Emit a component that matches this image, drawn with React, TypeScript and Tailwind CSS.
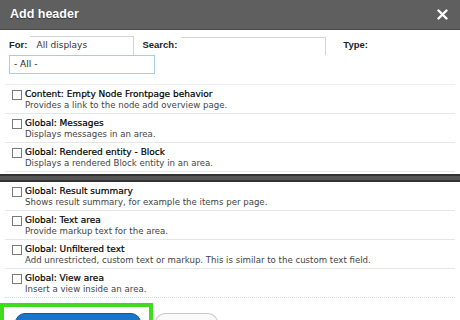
import React from "react";

const groupA = [
  { title: "Content: Empty Node Frontpage behavior", desc: "Provides a link to the node add overview page." },
  { title: "Global: Messages", desc: "Displays messages in an area." },
  { title: "Global: Rendered entity - Block", desc: "Displays a rendered Block entity in an area." },
];

const groupB = [
  { title: "Global: Result summary", desc: "Shows result summary, for example the items per page." },
  { title: "Global: Text area", desc: "Provide markup text for the area." },
  {
    title: "Global: Unfiltered text",
    desc: "Add unrestricted, custom text or markup. This is similar to the custom text field.",
  },
  { title: "Global: View area", desc: "Insert a view inside an area." },
];

function Option({ title, desc, last }: { title: string; desc: string; last?: boolean }) {
  return (
    <div
      className={`mx-[5px] pl-[7px] pt-[4px] pb-[2px] h-[29px] ${
        last ? "border-b border-dotted border-[#d8d8d8]" : "border-b border-[#e6e6e6]"
      }`}
    >
      <div className="flex items-center h-[11px] gap-[3px]">
        <span className="w-[10px] h-[10px] border border-[#7a7a7a] bg-white shrink-0" />
        <span className="text-[9px] text-black leading-none [-webkit-text-stroke:0.2px_black]">{title}</span>
      </div>
      <div className="pl-[13px] h-[11px] flex items-center text-[8.6px] text-[#444] leading-none">{desc}</div>
    </div>
  );
}

export default function App() {
  return (
    <div className="w-[460px] h-[320px] overflow-hidden bg-white font-['DejaVu_Sans',sans-serif]">
      {/* title bar */}
      <div className="h-[30px] bg-[#5f5f5f] border-b border-[#4a4a4a] flex items-center justify-between pl-[10px] pr-[12px]">
        <span className="text-white font-bold text-[12.5px] font-['Liberation_Sans',sans-serif] [text-shadow:0_1px_1px_#333]">
          Add header
        </span>
        <svg width="11" height="11" viewBox="0 0 11 11">
          <path d="M1.5 1.5 L9.5 9.5 M9.5 1.5 L1.5 9.5" stroke="white" strokeWidth="2.4" strokeLinecap="round" />
        </svg>
      </div>

      {/* filters */}
      <div className="pl-[9px] pt-[6px] font-['Liberation_Sans',sans-serif]">
        <div className="flex items-center h-[19px] text-[9.5px] text-[#222]">
          <span className="font-bold">For:</span>
          <div className="ml-[3px] w-[104px] h-[19px] border-t border-r border-[#d4d4d4] flex items-center pl-[6px] text-[9px] text-[#333] font-['DejaVu_Sans',sans-serif]">
            All displays
          </div>
          <span className="ml-[8px] font-bold">Search:</span>
          <div className="ml-[4px] w-[145px] h-[18px] border-t border-r border-[#d4d4d4]" />
          <span className="ml-[17px] font-bold">Type:</span>
        </div>
        <div className="w-[146px] h-[19px] border border-[#a7cde6] flex items-center pl-[4px] text-[9px] text-[#222] font-['DejaVu_Sans',sans-serif]">
          - All -
        </div>
      </div>

      {/* options */}
      <div className="mt-[10px] border-t border-[#ececec] mx-[5px]" />
      <div>
        {groupA.map((o) => (
          <Option key={o.title} {...o} />
        ))}
      </div>
      <div className="mt-[2px] h-[8px] bg-[#555] border-y-2 border-[#333]" />
      <div>
        {groupB.map((o, i) => (
          <Option key={o.title} {...o} last={i === groupB.length - 1} />
        ))}
      </div>

      {/* buttons */}
      <div className="flex items-start mt-[5px]">
        <div className="w-[153px] h-[20px] border-4 border-b-0 border-[#3fdc1e] pl-[11px] pt-[6px]">
          <div className="w-[126px] h-[14px] rounded-t-[10px] bg-[#1a74c8] border border-[#0e5aa3]" />
        </div>
        <div className="ml-[2px] mt-[10px] w-[63px] h-[14px] rounded-t-[10px] border border-[#c8c8c8] border-b-0 bg-[#fafafa]" />
      </div>
    </div>
  );
}
